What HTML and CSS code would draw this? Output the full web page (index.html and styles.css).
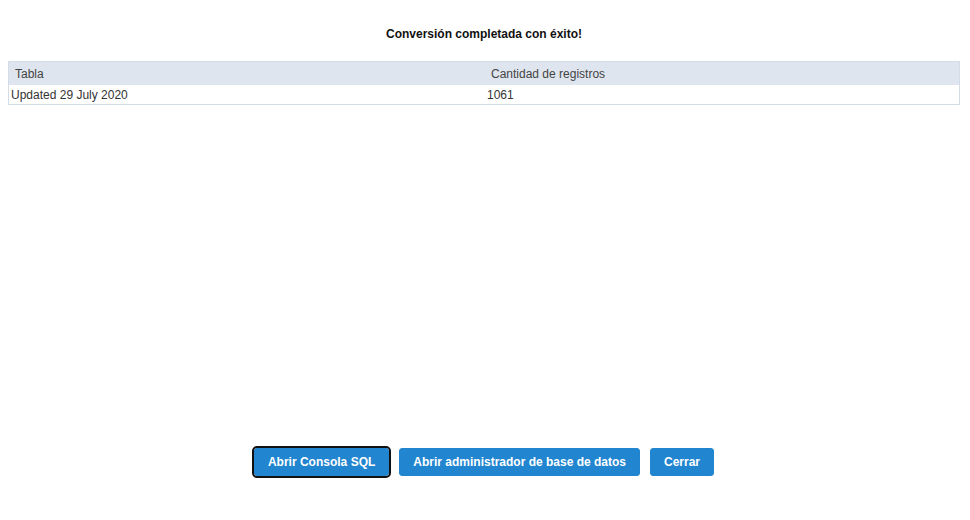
FILE: index.html
```html
<!DOCTYPE html>
<html lang="es">
<head>
<meta charset="utf-8">
<title>Conversión</title>
<link rel="stylesheet" href="styles.css">
</head>
<body>
<div class="page">
  <div class="title">Conversión completada con éxito!</div>
  <table class="result">
    <thead>
      <tr><th>Tabla</th><th class="col2">Cantidad de registros</th></tr>
    </thead>
    <tbody>
      <tr><td>Updated 29 July 2020</td><td class="col2">1061</td></tr>
    </tbody>
  </table>
  <div class="spacer"></div>
  <div class="actions">
    <button class="btn focused">Abrir Consola SQL</button>
    <button class="btn">Abrir administrador de base de datos</button>
    <button class="btn">Cerrar</button>
  </div>
</div>
</body>
</html>
```
FILE: styles.css
```css
html, body {
  margin: 0;
  padding: 0;
  background: #fff;
}
body {
  font-family: "Liberation Sans", Arial, sans-serif;
  font-size: 12px;
  color: #333;
}
.page {
  height: 520px;
  box-sizing: border-box;
  padding: 0 10px 0 8px;
  display: flex;
  flex-direction: column;
}
.title {
  margin-top: 27px;
  height: 34px;
  line-height: 14px;
  text-align: center;
  font-weight: bold;
  color: #111;
}
.result {
  width: 100%;
  border-collapse: collapse;
  border: 1px solid #d3dce6;
  table-layout: fixed;
}
.result th {
  background: #dfe5ee;
  font-weight: normal;
  text-align: left;
  color: #444;
  height: 23px;
  padding: 0 6px;
  line-height: 14px;
}
.result td {
  height: 19px;
  padding: 0 2px;
  color: #333;
  line-height: 14px;
}
.result th.col2 {
  padding-left: 7px;
}
.result td.col2 {
  padding-left: 3px;
}
.spacer {
  flex: 1;
}
.actions {
  display: flex;
  justify-content: center;
  gap: 10px;
  margin-bottom: 44px;
}
.btn {
  font-family: "Liberation Sans", Arial, sans-serif;
  font-size: 12px;
  font-weight: bold;
  color: #fff;
  background: #2185d0;
  border: 1px solid #2185d0;
  border-radius: 3px;
  height: 28px;
  padding: 0 13px;
  cursor: pointer;
}
.btn.focused {
  outline: 2px solid #111;
  outline-offset: 0;
  border-radius: 3px;
}
```
